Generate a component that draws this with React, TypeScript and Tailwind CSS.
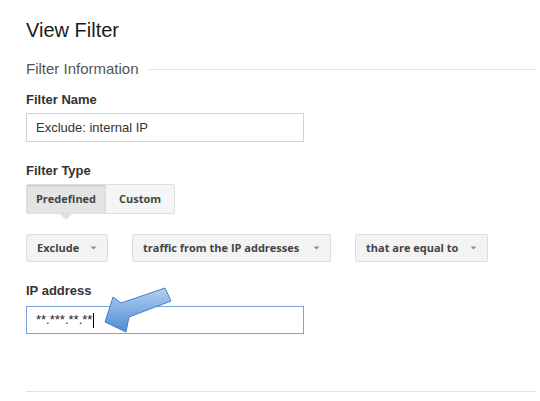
import React from "react";

const Caret = () => (
  <svg width="7" height="4" viewBox="0 0 7 4" className="ml-auto">
    <path d="M0.5 0.5 L6.5 0.5 L3.5 3.5 Z" fill="#8f8f8f" />
  </svg>
);

function Dropdown({ label, w }: { label: string; w: string }) {
  return (
    <div
      className={`flex items-center h-[28px] pl-[10px] pr-[10px] rounded-[2px] border border-[#dcdcdc] bg-[#f3f3f3] text-[11px] font-bold text-[#444] ${w}`}
      style={{ fontFamily: '"Open Sans", sans-serif' }}
    >
      <span>{label}</span>
      <Caret />
    </div>
  );
}

export default function App() {
  return (
    <div
      className="relative w-[540px] h-[401px] bg-white overflow-hidden pl-[26px] pr-[4px] pt-[18px]"
      style={{ fontFamily: '"Liberation Sans", Arial, sans-serif' }}
    >
      <h1 className="text-[20px] leading-[24px] text-[#1a1a1a]">View Filter</h1>

      <div className="mt-[18px] flex items-center gap-[10px] h-[18px]">
        <span className="text-[15px] leading-[18px] text-[#555] whitespace-nowrap">Filter Information</span>
        <div className="flex-1 h-px bg-[#e3e3e3] mt-[1px]" />
      </div>

      <div className="mt-[14px] text-[13px] leading-[16px] font-bold text-[#333]">Filter Name</div>
      <div className="mt-[5px] w-[278px] h-[29px] border border-[#d4d4d4] flex items-center pl-[9px] text-[13px] text-[#333]">
        Exclude: internal IP
      </div>

      <div className="mt-[21px] text-[13px] leading-[16px] font-bold text-[#333]">Filter Type</div>
      <div className="relative mt-[5px] flex w-[149px] h-[30px] border border-[#dedede] rounded-[2px] text-[11px] font-bold text-[#444]" style={{ fontFamily: '"Open Sans", sans-serif' }}>
        <div className="w-[78px] flex items-center justify-center bg-[#e4e4e4] shadow-[inset_0_1px_2px_rgba(0,0,0,0.12)]">Predefined</div>
        <div className="flex-1 flex items-center justify-center bg-[#f5f5f5] border-l border-[#e0e0e0]">Custom</div>
        <div className="absolute left-[33px] top-[29px] w-0 h-0 border-l-[6px] border-r-[6px] border-t-[6px] border-l-transparent border-r-transparent border-t-[#e0e0e0]" />
      </div>

      <div className="mt-[20px] flex gap-[24px]">
        <Dropdown label="Exclude" w="w-[82px]" />
        <Dropdown label="traffic from the IP addresses" w="w-[199px]" />
        <Dropdown label="that are equal to" w="w-[133px]" />
      </div>

      <div className="mt-[21px] text-[13px] leading-[16px] font-bold text-[#333]">IP address</div>
      <div className="mt-[7px] w-[278px] h-[28px] border border-[#7aa3db] flex items-center pl-[9px] text-[13px] text-[#222]">
        <span>**.***.**.**</span>
        <span className="inline-block w-px h-[15px] bg-black ml-[1px]" />
      </div>

      <div className="mt-[57px] h-px bg-[#e3e3e3]" />

      <svg className="absolute left-[100px] top-[285px]" width="76" height="50" viewBox="0 0 76 50">
        <defs>
          <linearGradient id="ag" x1="0" y1="0" x2="0" y2="1">
            <stop offset="0" stopColor="#b3d0f2" />
            <stop offset="1" stopColor="#4f8ad6" />
          </linearGradient>
        </defs>
        <path
          d="M5 37 L13 12 L21 18 L65 3 L71 16 L29 32 L26 47 Z"
          fill="url(#ag)"
          stroke="#4a7ec4"
          strokeWidth="1"
          strokeLinejoin="round"
        />
      </svg>
    </div>
  );
}
